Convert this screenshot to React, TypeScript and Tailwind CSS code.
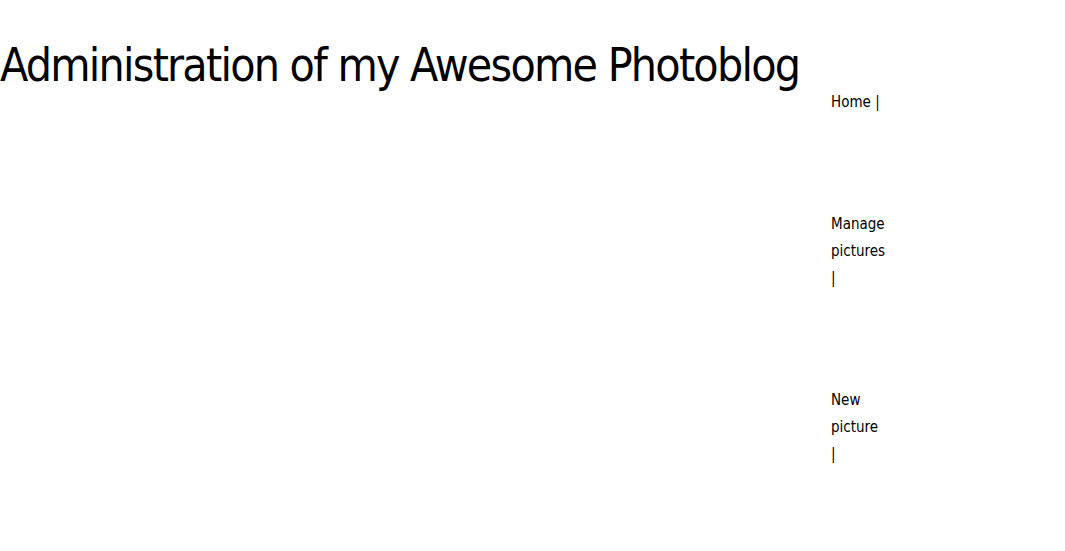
export default function App() {
  const links = ["Home", "Manage pictures", "New picture"];

  return (
    <div className="flex items-start bg-white text-black min-h-[551px] font-['DejaVu_Sans_Condensed','DejaVu_Sans',sans-serif]">
      <h1 className="w-[831px] shrink-0 pt-[38px] text-[46px] leading-[54px] tracking-[-1.75px] whitespace-nowrap">
        Administration of my Awesome Photoblog
      </h1>
      <ul className="w-[55px] pt-[89px] text-[15px] leading-[27px]">
        {links.map((link) => (
          <li key={link} className="mb-[95px]">
            <a href="#">{link}</a> |
          </li>
        ))}
      </ul>
    </div>
  );
}
